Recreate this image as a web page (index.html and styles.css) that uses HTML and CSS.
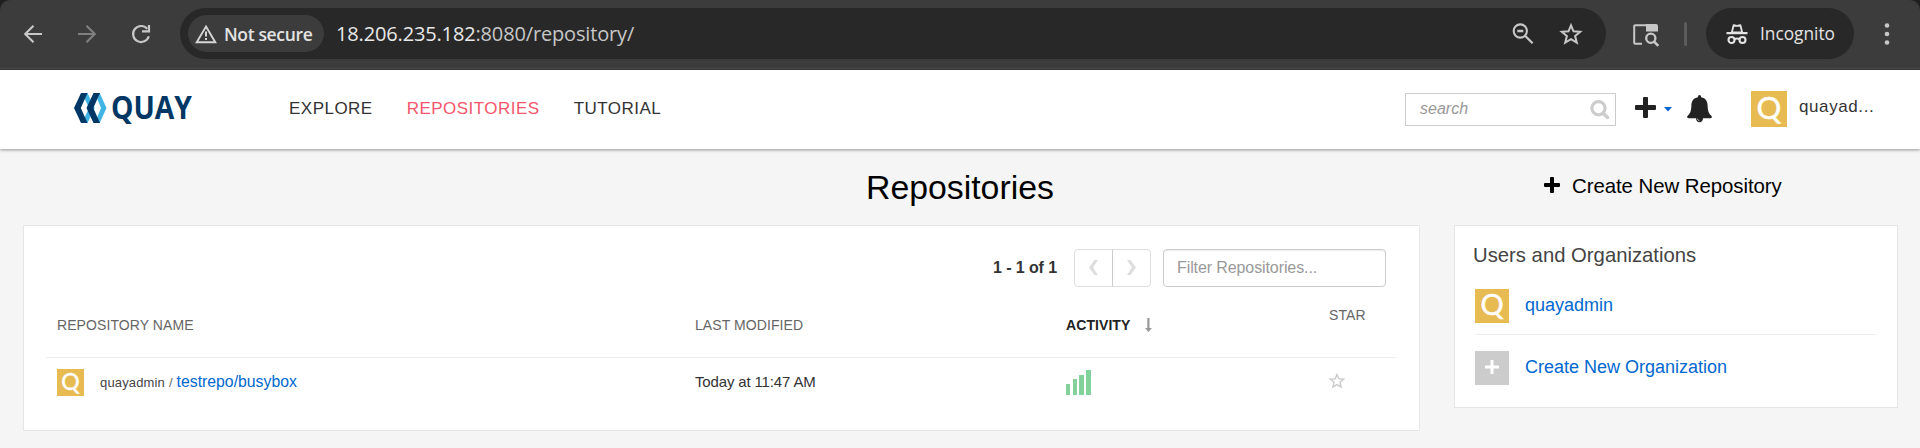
FILE: index.html
```html
<!DOCTYPE html>
<html lang="en">
<head>
<meta charset="utf-8">
<title>Repositories</title>
<link rel="stylesheet" href="styles.css">
</head>
<body>
<div class="chrome">
  <div class="toolbar">
    <svg class="nav-icon" width="20" height="20" viewBox="0 0 20 20"><path d="M19 10H2.500M10.500 1.700L2.200 10l8.300 8.300" fill="none" stroke="#c7c7c7" stroke-width="2.100"/></svg>
    <svg class="nav-icon" width="20" height="20" viewBox="0 0 20 20"><path d="M1 10h16.500M9.500 1.700L17.800 10l-8.300 8.300" fill="none" stroke="#808080" stroke-width="2.100"/></svg>
    <svg class="nav-icon" width="20" height="20" viewBox="0 0 20 20"><path d="M16.200 4.800A8 8 0 1 0 17.800 12.200M18 1v6.300h-7" fill="none" stroke="#c7c7c7" stroke-width="2.200"/></svg>
    <div class="omnibox">
      <div class="chip">
        <svg width="22" height="20" viewBox="0 0 22 20"><path d="M11 2.500L20.300 18.300H1.700z" fill="none" stroke="#d6d6d6" stroke-width="1.900"/><path d="M11 7.500v5M11 14v2" stroke="#d6d6d6" stroke-width="2"/></svg>
        <span>Not secure</span>
      </div>
      <div class="url"><span class="host">18.206.235.182</span>:8080/repository/</div>
      <svg class="zoom-icon" width="22" height="22" viewBox="0 0 22 22"><circle cx="8.300" cy="8" r="6.600" fill="none" stroke="#c7c7c7" stroke-width="2.100"/><path d="M5.300 8h6M12.800 12.500l7.800 7.800" stroke="#c7c7c7" stroke-width="2.300"/></svg>
      <svg class="star-icon" width="24" height="24" viewBox="0 0 24 24"><path d="M12 3.300l2.500 6 6.700.5-5.100 4.300 1.700 6.600L12 17.200l-5.800 3.500 1.700-6.600-5.100-4.300 6.700-.5z" fill="none" stroke="#c7c7c7" stroke-width="2"/></svg>
    </div>
    <svg class="side-icon" width="28" height="24" viewBox="0 0 28 24"><path d="M14 2.200H3.200a1 1 0 0 0-1 1v16.600a1 1 0 0 0 1 1H10" fill="none" stroke="#c7c7c7" stroke-width="2"/><path d="M14 1h10a2 2 0 0 1 2 2v5.500H14z" fill="#c7c7c7"/><circle cx="18.800" cy="15.200" r="4.600" fill="none" stroke="#c7c7c7" stroke-width="2.300"/><path d="M22 18.500l4.300 4.300" stroke="#c7c7c7" stroke-width="2.500"/></svg>
    <div class="divider"></div>
    <div class="incognito">
      <svg width="22" height="22" viewBox="0 0 22 22"><path d="M5 9L6.700 2q.3-1 1.400-.7L11 2l2.900-.7q1.100-.3 1.400.7L17 9h4.500v2.200H.5V9z" fill="#e3e3e3"/><path d="M8.200 3.700h5.600L15 8.600H7z" fill="#292929"/><g fill="none" stroke="#e3e3e3" stroke-width="2.100"><circle cx="5.500" cy="17" r="3"/><circle cx="16.500" cy="17" r="3"/><path d="M8.500 16.300q2.500-1.500 5 0"/></g></svg>
      <span>Incognito</span>
    </div>
    <svg class="dots" width="6" height="24" viewBox="0 0 6 24"><g fill="#c7c7c7"><circle cx="3" cy="3.500" r="2.300"/><circle cx="3" cy="12" r="2.300"/><circle cx="3" cy="20.500" r="2.300"/></g></svg>
  </div>
</div>

<header class="header">
  <svg class="logo" width="122" height="38" viewBox="0 0 122 38">
    <path d="M8 3h5.500l7.200 15-7.200 15H8l7-15zM21 3h4.700l6.800 15-6.800 15H21l6-15z" fill="#40b4e5"/>
    <path d="M7 3h6.500L6.800 18l6.700 15H7L0 18zM19.500 3h6.500l-6.700 15L26 33h-6.500l-7-15z" fill="#003764"/>
    <text class="logo-text" x="37" y="29" textLength="81" lengthAdjust="spacingAndGlyphs">QUAY</text>
  </svg>
  <nav class="nav">
    <a>EXPLORE</a><a class="active">REPOSITORIES</a><a>TUTORIAL</a>
  </nav>
  <div class="search"><span>search</span>
    <svg width="20" height="20" viewBox="0 0 20 20"><circle cx="8.500" cy="8.300" r="6.600" fill="none" stroke="#ccc" stroke-width="3.200"/><path d="M13 13l4.500 4.500" stroke="#ccc" stroke-width="3.500" stroke-linecap="round"/></svg>
  </div>
  <svg class="plus-icon" width="21" height="21" viewBox="0 0 21 21"><path d="M9 0h3q1 0 1 1v7h7q1 0 1 1v3q0 1-1 1h-7v7q0 1-1 1H9q-1 0-1-1v-7H1q-1 0-1-1V9q0-1 1-1h7V1q0-1 1-1z" fill="#222"/></svg>
  <svg class="caret" width="8" height="5" viewBox="0 0 8 5"><path d="M0 0h8L4 4.400z" fill="#0066ce"/></svg>
  <svg class="bell" width="25" height="28" viewBox="0 0 25 28"><path d="M12.500 0q1.700 0 1.600 2.200c4.500.7 6.400 4 6.500 8 .1 6 1.400 8.700 4.200 11q.4 2-1.300 2H16c0 5.400-7 5.400-7 0H1.500q-1.700 0-1.300-2c2.800-2.300 4.100-5 4.200-11 .1-4 2-7.300 6.500-8Q10.800 0 12.500 0z" fill="#222"/><path d="M10.300 23.500q.2 2 2.200 2.200" fill="none" stroke="#fff" stroke-width=".6"/></svg>
  <div class="avatar avatar-user">Q</div>
  <span class="username">quayad...</span>
</header>

<main>
  <div class="title-row">
    <h1>Repositories</h1>
    <a class="create-repo"><svg width="16" height="16" viewBox="0 0 16 16"><path d="M7 0h2q1 0 1 1v5h5q1 0 1 1v2q0 1-1 1h-5v5q0 1-1 1H7q-1 0-1-1v-5H1q-1 0-1-1V7q0-1 1-1h5V1q0-1 1-1z"/></svg><span>Create New Repository</span></a>
  </div>
  <div class="columns">
    <section class="panel repos">
      <div class="controls">
        <span class="count">1 - 1 of 1</span>
        <div class="pager">
          <div class="page-btn"><svg width="9" height="15" viewBox="0 0 9 15"><path d="M5.500 0H9L4 7.500 9 15H5.500L0 7.500z" fill="#ddd"/></svg></div>
          <div class="page-btn"><svg width="9" height="15" viewBox="0 0 9 15"><path d="M3.500 0H0l5 7.500L0 15h3.500L9 7.500z" fill="#ddd"/></svg></div>
        </div>
        <div class="filter">Filter Repositories...</div>
      </div>
      <div class="grid head">
        <span>REPOSITORY NAME</span>
        <span>LAST MODIFIED</span>
        <span class="sorted">ACTIVITY<svg width="7" height="14" viewBox="0 0 7 14"><path d="M2.300 0h2.200v10H7l-3.600 4L0 10h2.300z" fill="#999"/></svg></span>
        <span class="star-head">STAR</span>
      </div>
      <div class="grid row">
        <div class="repo"><div class="avatar avatar-sm">Q</div><span class="owner">quayadmin</span><span class="slash">/</span><a class="link">testrepo/busybox</a></div>
        <span class="date">Today at 11:47 AM</span>
        <div class="bars"><i class="bar b1"></i><i class="bar b2"></i><i class="bar b3"></i><i class="bar b4"></i></div>
        <svg class="fav" width="16" height="16" viewBox="0 0 16 16"><path d="M8 1.500l1.900 4.200 4.700.4-3.600 3.100 1.100 4.700L8 11.500l-4.100 2.400L5 9.200 1.400 6.100l4.700-.4z" fill="none" stroke="#ccc" stroke-width="1.500"/></svg>
      </div>
    </section>
    <aside class="panel orgs">
      <h2>Users and Organizations</h2>
      <div class="org"><div class="avatar avatar-md">Q</div><a class="link">quayadmin</a></div>
      <div class="org new"><div class="avatar avatar-md plus-box"><svg width="16" height="16" viewBox="0 0 16 16"><path d="M6.500 1h3v5.500H15v3H9.500V15h-3V9.500H1v-3h5.500z" fill="#fff"/></svg></div><a class="link">Create New Organization</a></div>
    </aside>
  </div>
</main>
</body>
</html>
```
FILE: styles.css
```css
* { box-sizing: border-box; flex-shrink: 0; }
body { margin: 0; width: 1920px; height: 448px; overflow: hidden; background: #f5f5f5; font-family: "Liberation Sans", Arial, sans-serif; color: #333; }
svg { display: block; overflow: visible; }
span, a { white-space: nowrap; }

.chrome { height: 70px; background: #1f1f1f; }
.toolbar { display: flex; align-items: center; height: 70px; padding: 0 0 2px 23px; background: #3c3c3c; border-bottom: 1px solid #3a3a3a; box-shadow: inset 0 -1px #484848; border-radius: 10px 10px 0 0; font-family: "Open Sans", "Noto Sans", sans-serif; }
.nav-icon { margin-right: 34px; }
.omnibox { display: flex; align-items: center; width: 1426px; height: 51px; margin-left: -5px; padding-left: 8px; border-radius: 26px; background: #282828; }
.chip { display: flex; align-items: center; width: 136px; height: 37px; padding-left: 7px; gap: 7px; border-radius: 19px; background: #3c3c3c; color: #e3e3e3; font-weight: 600; font-size: 17.5px; letter-spacing: -0.35px; }
.url { width: 1176px; margin-left: 12px; color: #c7c7c7; font-size: 20px; letter-spacing: -.15px; }
.host { color: #e8e8e8; }
.star-icon { margin-left: 25px; }
.side-icon { margin-left: 26px; margin-top: 2px; }
.divider { width: 3px; height: 24px; margin-left: 24px; border-radius: 2px; background: #5c5c5c; }
.incognito { display: flex; align-items: center; width: 148px; height: 51px; margin-left: 19px; padding-left: 20px; gap: 12px; border-radius: 26px; background: #282828; color: #e3e3e3; font-size: 17.3px; }
.dots { margin-left: 30px; }

.header { position: relative; display: flex; align-items: flex-start; height: 79px; background: #fff; box-shadow: 0 1px 3px rgba(0, 0, 0, .4); }
.logo { margin: 20px 0 0 74px; }
.logo-text { font: 700 33px "Open Sans", sans-serif; fill: #003764; }
.nav { display: flex; gap: 34px; width: 1116px; margin: 29px 0 0 93px; font-size: 17px; line-height: 20px; letter-spacing: .48px; color: #333; }
.nav .active { color: #f4566b; }
.search { display: flex; justify-content: space-between; width: 211px; height: 33px; margin-top: 23px; padding: 5px 5px 0 14px; border: 1px solid #ccc; color: #999; font-size: 16px; font-style: italic; line-height: 20px; }
.search svg { margin-top: 1px; }
.plus-icon { margin: 27px 0 0 19px; }
.caret { margin: 37px 0 0 8px; }
.bell { margin: 25px 0 0 15px; }
.avatar { display: flex; align-items: center; justify-content: center; background: #e7ba52; color: #fff; font-family: Lato, "Open Sans", sans-serif; -webkit-text-stroke: .5px #fff; }
.avatar-user { width: 36px; height: 36px; margin: 21px 0 0 39px; padding-bottom: 5px; font-size: 31px; }
.username { margin: 27px 0 0 12px; font-size: 17px; line-height: 20px; letter-spacing: .6px; }

.title-row { display: grid; grid-template-columns: 868px 676px 1fr; height: 76px; color: #000; }
h1 { grid-column: 2; margin: 18px 0 0 -2px; font-size: 33.8px; font-weight: 400; line-height: 40px; }
.create-repo { display: flex; gap: 12px; height: 24px; margin-top: 26px; font-size: 20.4px; line-height: 22px; letter-spacing: -.05px; }
.create-repo svg { margin-top: 2px; }

.columns { display: flex; align-items: flex-start; padding-left: 23px; gap: 34px; }
.panel { background: #fff; border: 1px solid #e6e6e6; }
.repos { width: 1397px; height: 206px; padding: 23px 22px 0; }
.controls { display: flex; justify-content: flex-end; align-items: center; height: 38px; padding-right: 11px; }
.count { margin-right: 17px; font-size: 16px; font-weight: 700; letter-spacing: -.1px; }
.pager { display: flex; width: 77px; height: 38px; margin-right: 12px; border: 1px solid #ddd; border-radius: 4px; }
.page-btn { display: flex; flex: 1; align-items: center; justify-content: center; padding-bottom: 2px; }
.page-btn + .page-btn { border-left: 1px solid #ccc; }
.filter { width: 223px; height: 38px; padding-left: 13px; border: 1px solid #ccc; border-radius: 4px; box-shadow: inset 0 1px 1px rgba(0, 0, 0, .075); color: #999; font-size: 16px; line-height: 36px; letter-spacing: -.1px; }
.grid { display: grid; grid-template-columns: 638px 371px 263px 1fr; padding-left: 11px; }
.head { height: 71px; padding-top: 28px; border-bottom: 1px solid #eee; color: #666; font-size: 14px; line-height: 20px; letter-spacing: .08px; }
.sorted { display: flex; gap: 15px; color: #222; font-weight: 700; }
.sorted svg { margin-top: 3px; }
.star-head { margin-top: -10px; }
.row { padding-top: 11px; }
.repo { display: flex; line-height: 26px; }
.avatar-sm { width: 27px; height: 27px; padding-bottom: 3px; font-size: 23px; }
.owner { margin-left: 16px; color: #444; font-size: 13px; letter-spacing: .15px; line-height: 27px; }
.slash { margin: 0 4px; color: #666; font-size: 13px; line-height: 27px; }
.link { color: #0068cf; font-size: 15.8px; }
.date { font-size: 15px; line-height: 26px; letter-spacing: -.15px; }
.bars { display: flex; align-items: flex-end; height: 26px; }
.bar { width: 4px; background: #83d19b; }
.b1 { height: 11px; margin-right: 3px; }
.b2 { height: 16px; margin-right: 2px; }
.b3 { width: 5px; height: 20px; margin-right: 2px; }
.b4 { width: 5px; height: 25px; }
.fav { margin: 4px 0 0 0; }

.orgs { width: 444px; height: 183px; padding: 17px 20px 0; }
h2 { margin: 0 0 21px -2px; font-size: 20.3px; font-weight: 400; line-height: 25px; color: #444; white-space: nowrap; }
.org { display: flex; width: 401px; height: 46px; gap: 16px; border-bottom: 1px solid #eee; }
.org .link { font-size: 18px; line-height: 32px; }
.org.new { padding-top: 16px; height: 52px; border: 0; }
.avatar-md { width: 34px; height: 34px; padding-bottom: 5px; font-size: 29px; }
.plus-box { background: #ccc; padding-bottom: 2px; }
```
